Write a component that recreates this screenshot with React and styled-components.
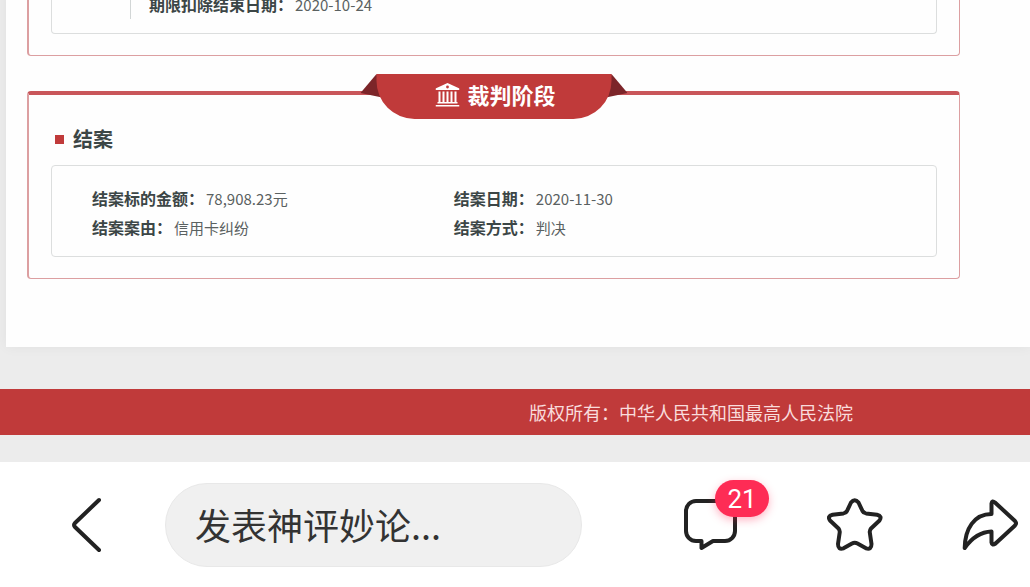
import React from 'react'
import styled, { createGlobalStyle } from 'styled-components'

const GlobalStyle = createGlobalStyle`
* { box-sizing: border-box; }
body {
  margin: 0;
  background: #ececec;
  font-family: "Noto Sans CJK SC", "Noto Sans", sans-serif;
  color: #3c4646;
}
`
const Screen = styled.div`
display: flex;
flex-direction: column;
height: 100vh;
overflow: hidden;`
const Scroll = styled.div`
flex: 1;
min-height: 0;
display: flex;
flex-direction: column;
justify-content: flex-end;
overflow: hidden;`
const Sheet = styled.main`
display: flex;
flex-direction: column;
gap: 35px;
margin-left: 6px;
padding: 0 70px 68px 21px;
background: #fefefe;
box-shadow: 0 0 12px rgba(0, 0, 0, 0.05);`
const Panel = styled.section`
position: relative;
padding: 0 22px 21px;
border: 1px solid #dc9fa1;
border-left-width: 2px;
border-top: ${({ $open }) => ($open ? 'none' : '4px solid #c9565a')};
border-radius: ${({ $open }) => ($open ? '0 0 4px 4px' : '4px')};`
const Ribbon = styled.div`
position: absolute;
top: -21px;
left: 50%;
width: 235px;
transform: translateX(-50%);
&::before, &::after {
  content: '';
  position: absolute;
  top: 0;
  width: 24px;
  height: 24px;
  background: #7c2529;
}
&::before {
  left: -16px;
  clip-path: polygon(16px 0, 0 19px, 24px 24px);
}
&::after {
  right: -16px;
  clip-path: polygon(8px 0, 24px 19px, 0 24px);
}`
const RibbonTitle = styled.h2`
position: relative;
z-index: 1;
display: flex;
align-items: center;
justify-content: center;
gap: 8px;
height: 45px;
margin: 0;
padding: 0 0 4px 3px;
border-radius: 0 0 38px 38px;
background: #c03a3a;
color: #fff;
font-size: 22px;
line-height: 32px;
& span {
  padding-bottom: 2px;
}`
const Heading = styled.h3`
display: flex;
align-items: center;
gap: 9px;
margin: 0;
padding: 29px 4px 11px;
font-size: 20px;
line-height: 30px;
&::before {
  content: '';
  width: 9px;
  height: 9px;
  background: #c03a3a;
}`
const Box = styled.div`
padding: ${({ $open }) => ($open ? '0 40px 14px 78px' : '18px 40px 14px')};
border: 1px solid #dcdede;
border-top-width: ${({ $open }) => ($open ? '0' : '1px')};
border-radius: ${({ $open }) => ($open ? '0 0 4px 4px' : '4px')};`
const Timeline = styled.div`
padding-left: 18px;
border-left: 1px solid #d2d6d6;`
const Fields = styled.dl`
display: grid;
grid-template-columns: 45% 1fr;
margin: 0;`
const Field = styled.div`
display: flex;
gap: 2px;
line-height: 29px;`
const Label = styled.dt`
font-size: 16px;
font-weight: 700;`
const Value = styled.dd`
margin: 0;
font-size: 15px;
color: #5a6161;`
const Copyright = styled.footer`
margin: 42px 0 27px;
padding-left: 352px;
background: #c03a3a;
color: #f9dcdc;
font-size: 18px;
line-height: 46px;
text-align: center;`
const CommentBar = styled.form`
display: flex;
align-items: center;
height: 125px;
padding: 0 12px 0 71px;
background: #fff;`
const CommentInput = styled.input`
flex: 1;
min-width: 0;
height: 84px;
margin: 0 100px 0 62px;
padding: 0 29px 2px;
border: 1px solid #e8e8e8;
border-radius: 42px;
background: #f0f0f0;
font-family: inherit;
font-size: 36px;
color: #333;
outline: none;
&::placeholder {
  color: #333;
  opacity: 1;
}`
const Actions = styled.div`
display: flex;
gap: 79px;`
const IconButton = styled.button`
position: relative;
display: flex;
flex: none;
width: ${({ $width }) => $width || 56}px;
padding: 0;
border: none;
background: none;
color: #222;
cursor: pointer;`
const Badge = styled.span`
position: absolute;
top: -17px;
left: 33px;
width: 54px;
height: 37px;
border-radius: 19px;
background: #fe2c55;
box-shadow: 0 3px 8px rgba(254, 44, 85, 0.35);
color: #fff;
font-family: Roboto, sans-serif;
font-size: 26px;
line-height: 38px;
text-align: center;`

const LineIcon = ({ d, width = 56 }) => (
    <svg width={width} height="56" viewBox={`0 0 ${width} 56`} fill="none" stroke="currentColor"
        strokeWidth="4" strokeLinecap="round" strokeLinejoin="round" aria-hidden="true">
        <path d={d} />
    </svg>
)

const CourtIcon = () => (
    <svg width="24" height="24" viewBox="0 0 24 24" fill="currentColor" aria-hidden="true">
        <path fillRule="evenodd" d="M12 0 24 5.5V7H0V5.5ZM12 2.6a1.4 1.4 0 1 0 0 2.8 1.4 1.4 0 0 0 0-2.8Z" />
        <path d="M3 8.5h2v10.5H3zM7 8.5h2v10.5H7zM11 8.5h2v10.5h-2zM15 8.5h2v10.5h-2zM19 8.5h2v10.5h-2zM2 19h20v1.4H2zM0 22h24v1.6H0z" />
    </svg>
)

const closing = [
    { label: '结案标的金额', value: '78,908.23元' },
    { label: '结案日期', value: '2020-11-30' },
    { label: '结案案由', value: '信用卡纠纷' },
    { label: '结案方式', value: '判决' },
]

const Entry = ({ label, value }) => (
    <Field>
        <Label>{label}：</Label>
        <Value>{value}</Value>
    </Field>
)

export default function App() {
    return (
        <Screen>
            <GlobalStyle />
            <Scroll>
                <Sheet>
                    <Panel $open>
                        <Box $open>
                            <Timeline>
                                <Fields>
                                    <Entry label="期限扣除结束日期" value="2020-10-24" />
                                </Fields>
                            </Timeline>
                        </Box>
                    </Panel>
                    <Panel>
                        <Ribbon>
                            <RibbonTitle><CourtIcon /><span>裁判阶段</span></RibbonTitle>
                        </Ribbon>
                        <Heading>结案</Heading>
                        <Box>
                            <Fields>
                                {closing.map(item => <Entry key={item.label} {...item} />)}
                            </Fields>
                        </Box>
                    </Panel>
                </Sheet>
                <Copyright>版权所有：中华人民共和国最高人民法院</Copyright>
            </Scroll>
            <CommentBar onSubmit={e => e.preventDefault()}>
                <IconButton type="button" $width={32} aria-label="返回">
                    <LineIcon width={32} d="M28 3 4 26Q2 28 4 30L28 53" />
                </IconButton>
                <CommentInput type="text" placeholder="发表神评妙论..." aria-label="发表评论" />
                <Actions>
                    <IconButton type="button" $width={66} aria-label="评论">
                        <LineIcon d="M14 4H43a10 10 0 0 1 10 10V34a10 10 0 0 1-10 10H31L19.5 51V44H14a10 10 0 0 1-10-10V14A10 10 0 0 1 14 4Z" />
                        <Badge>21</Badge>
                    </IconButton>
                    <IconButton type="button" aria-label="收藏">
                        <LineIcon d="M24 5.5Q27.7 1 31.5 5.5L35.5 14Q36.5 16 39 16.4L50 17.8Q55.5 19 52.5 23.5L44 31.5Q42.5 33.5 42.8 35.5L44.5 47Q44.5 53 39 51.3L30.5 46.5Q27.7 45 25 46.5L16.5 51.3Q11 53 11 47L12.7 35.5Q13 33.5 11.5 31.5L3 23.5Q0 19 5.5 17.8L16.5 16.4Q19 16 20 14Z" />
                    </IconButton>
                    <IconButton type="button" aria-label="分享">
                        <LineIcon d="M2.7 51C3 32 12 17 29.5 17V6.5Q30 3 33 5.5L53 24Q55 26.3 53 28.5L33.5 46.5Q30 49 29.5 45.5V34.5Q14 35 2.7 51Z" />
                    </IconButton>
                </Actions>
            </CommentBar>
        </Screen>
    )
}
